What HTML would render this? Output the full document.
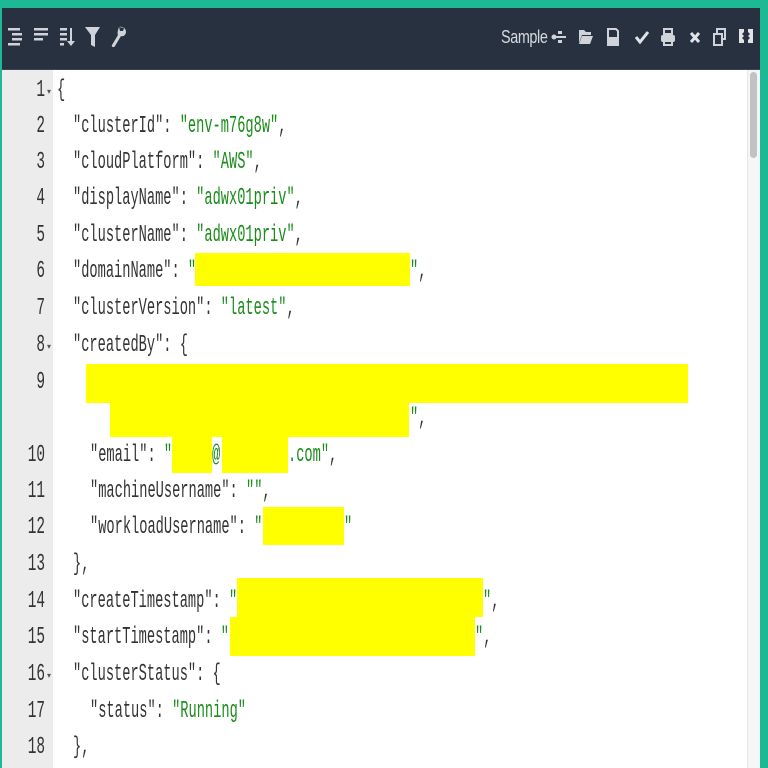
<!DOCTYPE html>
<html><head><meta charset="utf-8"><style>
html,body{margin:0;padding:0;width:768px;height:768px;overflow:hidden;background:#1db894;font-family:"Liberation Sans",sans-serif}
#frame{position:absolute;left:2px;top:8px;width:758px;height:760px;background:#fff;overflow:hidden}
#tb{position:absolute;left:0;top:0;width:758px;height:61px;background:#27313f;border-bottom:1px solid #3a4554}
#gut{position:absolute;left:0;top:62px;width:51px;height:700px;background:#ececec}
#sb{position:absolute;left:745px;top:62px;width:13px;height:700px;background:#f6f6f8;border-left:1px solid #e6e6ea}
#thumb{position:absolute;left:748px;top:64px;width:7px;height:86px;background:#c2c2c2;border-radius:4px}
.ln{position:absolute;left:0;width:43px;text-align:right;font-family:"Liberation Mono",monospace;font-size:24px;color:#333;transform:scaleX(0.6);transform-origin:right center;height:30px;line-height:30px;margin-top:2px}
.fd{position:absolute;left:45px;font-size:8px;color:#555;margin-top:2px}
.cd{position:absolute;white-space:pre;font-family:"Liberation Mono",monospace;font-size:24px;color:#333;transform:scaleX(0.57);transform-origin:left center;height:30px;line-height:30px;margin-top:2px}
.s{color:#1a8c1a}
.y{position:absolute;background:#ffff00}
.ic{position:absolute;top:17px}
</style></head><body>
<div id="frame">
<div id="tb">
<svg class="ic" style="left:6px" width="16" height="24" viewBox="0 0 16 24" fill="#d0d4da"><rect x="0" y="3" width="12" height="2.5"/><rect x="4" y="8" width="10" height="2.5"/><rect x="4" y="13" width="10" height="2.5"/><rect x="0" y="18" width="12" height="2.5"/></svg>
<svg class="ic" style="left:32px" width="16" height="24" viewBox="0 0 16 24" fill="#d0d4da"><rect x="0" y="3" width="14" height="2.5"/><rect x="0" y="8" width="14" height="2.5"/><rect x="0" y="13" width="9" height="2.5"/></svg>
<svg class="ic" style="left:58px" width="16" height="24" viewBox="0 0 16 24" fill="#d0d4da"><rect x="0" y="3" width="7" height="2.5"/><rect x="0" y="8" width="7" height="2.5"/><rect x="0" y="13" width="7" height="2.5"/><rect x="0" y="18" width="4" height="2.5"/><rect x="10" y="3" width="2" height="16"/><path d="M7 16h8l-4 5z"/></svg>
<svg class="ic" style="left:83px" width="16" height="24" viewBox="0 0 16 24" fill="#d0d4da"><path d="M0 2h15l-5 8v12l-4-2V10z"/></svg>
<svg class="ic" style="left:108px" width="18" height="24" viewBox="0 0 18 24" fill="#d0d4da"><path d="M9 2c3-1 7 1 7 5 0 3-3 5-5 4L5 21c-1 2-4 1-3-1l6-10c-1-2 0-5 1-8l1 4 3 0 1-3z"/></svg>
<span style="position:absolute;left:499px;top:19px;color:#d6dae0;font-size:18px;transform:scaleX(0.8);transform-origin:left;letter-spacing:-0.5px">Sample</span>
<svg class="ic" style="left:549px" width="16" height="24" viewBox="0 0 16 24" fill="#d0d4da"><rect x="2" y="11" width="13" height="2"/><circle cx="3" cy="12" r="2.5"/><rect x="7" y="6" width="4" height="3"/><rect x="7" y="15" width="4" height="3"/></svg>
<svg class="ic" style="left:577px" width="14" height="24" viewBox="0 0 14 24" fill="#d0d4da"><path d="M0 5h5l2 2h5v3H3L0 18z"/><path d="M3 11h11l-3 8H0z"/></svg>
<svg class="ic" style="left:605px" width="12" height="24" viewBox="0 0 12 24" fill="none" stroke="#d0d4da" stroke-width="2"><path d="M1 4h8l2 2v14H1z"/><rect x="3" y="13" width="6" height="5" fill="#d0d4da"/></svg>
<svg class="ic" style="left:633px" width="14" height="24" viewBox="0 0 14 24" fill="none" stroke="#e0e3e8" stroke-width="3"><path d="M1 12l4 5 8-10"/></svg>
<svg class="ic" style="left:659px" width="14" height="24" viewBox="0 0 14 24" fill="#d0d4da"><path d="M3 4h8v5H3z" fill="none" stroke="#d0d4da" stroke-width="2"/><rect x="0" y="10" width="14" height="7" rx="2"/><rect x="3" y="15" width="8" height="5" fill="none" stroke="#d0d4da" stroke-width="2"/></svg>
<svg class="ic" style="left:687px" width="12" height="24" viewBox="0 0 12 24" stroke="#e0e3e8" stroke-width="3"><path d="M2 8l8 9M10 8l-8 9"/></svg>
<svg class="ic" style="left:711px" width="14" height="24" viewBox="0 0 14 24" fill="none" stroke="#d0d4da" stroke-width="2"><path d="M4 8V4h8v10H9"/><path d="M1 9h8v11H1z"/></svg>
<svg class="ic" style="left:737px" width="14" height="24" viewBox="0 0 14 24" fill="#e0e3e8"><path d="M0 4h5v3L3 9l2 2-2 2 2 2v3H0zM14 4H9v3l2 2-2 2 2 2-2 2v3h5z"/></svg>
</div>
<div id="gut"></div>
<div id="sb"></div><div id="thumb"></div>

<div class="y" style="left:193px;top:245px;width:215px;height:33px"></div>
<div class="y" style="left:84px;top:356px;width:602px;height:39px"></div>
<div class="y" style="left:108px;top:394px;width:299px;height:35px"></div>
<div class="y" style="left:170px;top:428px;width:40px;height:37px"></div>
<div class="y" style="left:220px;top:428px;width:66px;height:37px"></div>
<div class="y" style="left:261px;top:499px;width:81px;height:38px"></div>
<div class="y" style="left:235px;top:570px;width:246px;height:39px"></div>
<div class="y" style="left:228px;top:609px;width:245px;height:39px"></div>

<div class="ln" style="top:66px">1</div><span class="fd" style="top:77px">▾</span>
<div class="ln" style="top:102px">2</div>
<div class="ln" style="top:138px">3</div>
<div class="ln" style="top:174px">4</div>
<div class="ln" style="top:211px">5</div>
<div class="ln" style="top:247px">6</div>
<div class="ln" style="top:284px">7</div>
<div class="ln" style="top:321px">8</div><span class="fd" style="top:332px">▾</span>
<div class="ln" style="top:358px">9</div>
<div class="ln" style="top:431px">10</div>
<div class="ln" style="top:467px">11</div>
<div class="ln" style="top:503px">12</div>
<div class="ln" style="top:540px">13</div>
<div class="ln" style="top:577px">14</div>
<div class="ln" style="top:613px">15</div>
<div class="ln" style="top:650px">16</div><span class="fd" style="top:661px">▾</span>
<div class="ln" style="top:687px">17</div>
<div class="ln" style="top:723px">18</div>

<div class="cd" style="left:55px;top:66px">{</div>
<div class="cd" style="left:71px;top:102px">"clusterId": <span class="s">"env-m76g8w"</span>,</div>
<div class="cd" style="left:71px;top:138px">"cloudPlatform": <span class="s">"AWS"</span>,</div>
<div class="cd" style="left:71px;top:174px">"displayName": <span class="s">"adwx01priv"</span>,</div>
<div class="cd" style="left:71px;top:211px">"clusterName": <span class="s">"adwx01priv"</span>,</div>
<div class="cd" style="left:71px;top:247px">"domainName": <span class="s">"</span></div>
<div class="cd" style="left:408px;top:247px"><span class="s">"</span>,</div>
<div class="cd" style="left:71px;top:284px">"clusterVersion": <span class="s">"latest"</span>,</div>
<div class="cd" style="left:71px;top:321px">"createdBy": {</div>
<div class="cd" style="left:408px;top:394px"><span class="s">"</span>,</div>
<div class="cd" style="left:88px;top:431px">"email": <span class="s">"</span></div>
<div class="cd" style="left:210px;top:431px"><span class="s">@</span></div>
<div class="cd" style="left:286px;top:431px"><span class="s">.com"</span>,</div>
<div class="cd" style="left:88px;top:467px">"machineUsername": <span class="s">""</span>,</div>
<div class="cd" style="left:88px;top:503px">"workloadUsername": <span class="s">"</span></div>
<div class="cd" style="left:342px;top:503px"><span class="s">"</span></div>
<div class="cd" style="left:71px;top:540px">},</div>
<div class="cd" style="left:71px;top:577px">"createTimestamp": <span class="s">"</span></div>
<div class="cd" style="left:481px;top:577px"><span class="s">"</span>,</div>
<div class="cd" style="left:71px;top:613px">"startTimestamp": <span class="s">"</span></div>
<div class="cd" style="left:473px;top:613px"><span class="s">"</span>,</div>
<div class="cd" style="left:71px;top:650px">"clusterStatus": {</div>
<div class="cd" style="left:88px;top:687px">"status": <span class="s">"Running"</span></div>
<div class="cd" style="left:71px;top:723px">},</div>
</div>
</body></html>
